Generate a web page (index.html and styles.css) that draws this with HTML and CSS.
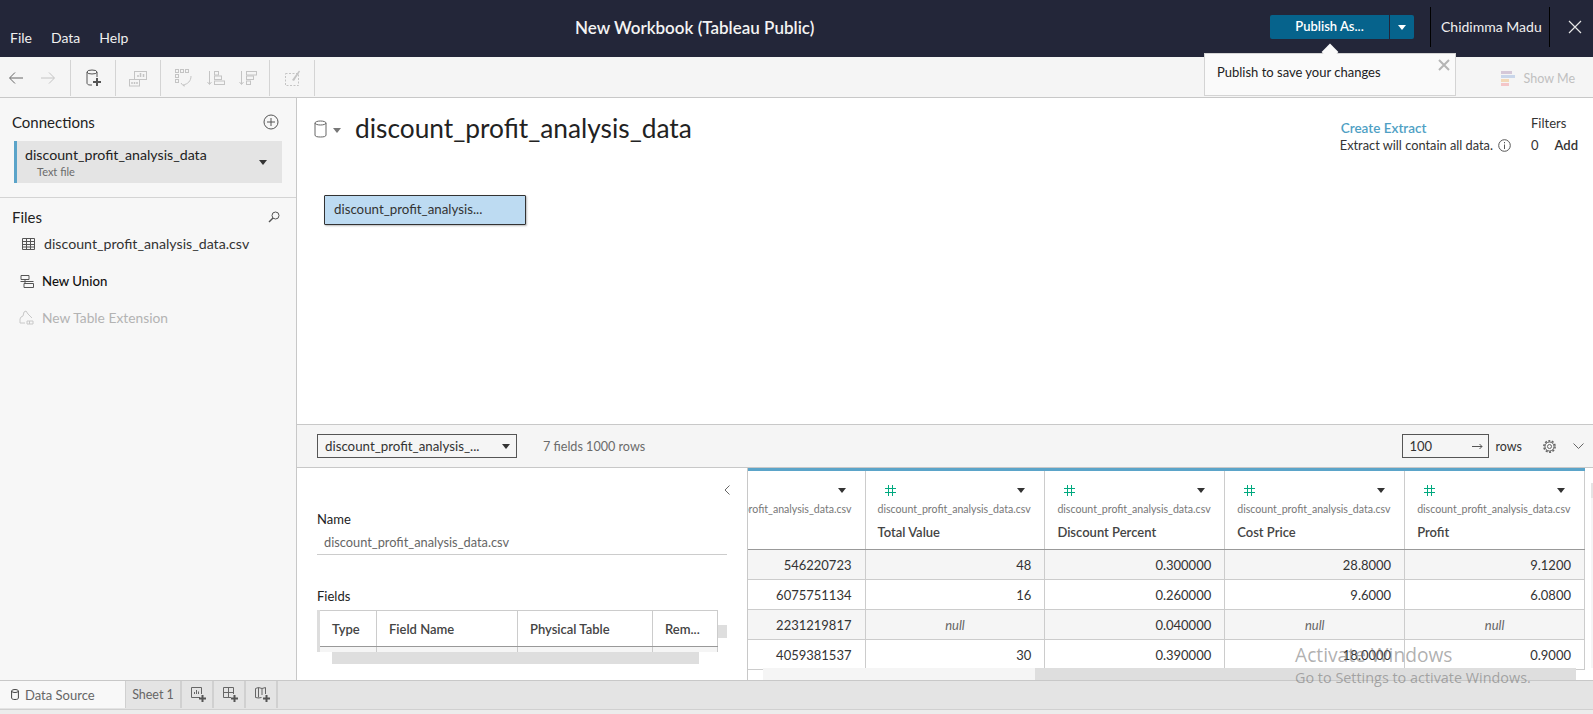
FILE: index.html
```html
<!DOCTYPE html>
<html>
  <head>
    <meta charset="UTF-8" />
    <title>New Workbook (Tableau Public)</title>
    <link rel="stylesheet" href="styles.css">
  </head>
  <body>
    <div class="app">
      <!-- Top bar -->
      <header class="topbar">
        <nav class="menu">
          <span>File</span>
          <span>Data</span>
          <span>Help</span>
        </nav>
        <div class="title">New Workbook (Tableau Public)</div>
        <div class="topbar-right">
          <div class="publish">
            <span class="publish-label">Publish As...</span>
            <span class="publish-arrow"><i class="caret caret-white"></i></span>
          </div>
          <div class="user">Chidimma Madu</div>
          <svg class="close-app" width="14" height="14" viewBox="0 0 14 14"><path d="M1 1l12 12M13 1L1 13" stroke="#e6e6e6" stroke-width="1.2" fill="none"/></svg>
        </div>
      </header>

      <!-- Toolbar -->
      <div class="toolbar">
        <div class="tool-group tg-nav">
          <svg width="16" height="14" viewBox="0 0 16 14"><path d="M15 7H2M7 1.500L1.500 7 7 12.500" stroke="#666" fill="none"/></svg>
          <svg width="16" height="14" viewBox="0 0 16 14"><path d="M1 7h13M9 1.500L14.500 7 9 12.500" stroke="#c4c4c4" fill="none"/></svg>
        </div>
        <div class="tool-group tg-data">
          <svg width="16" height="19" viewBox="0 0 16 19"><ellipse cx="6" cy="3" rx="5" ry="2" stroke="#555" fill="none"/><path d="M1 3v11c0 1 1 2 3 2h2M11 3v5" stroke="#555" fill="none"/><path d="M11 9v8M7 13h8" stroke="#555" stroke-width="2" fill="none"/></svg>
        </div>
        <div class="tool-group tg-chart">
          <svg width="18" height="17" viewBox="0 0 18 17"><g stroke="#c4c4c4" fill="none"><rect x="5.500" y="1.500" width="12" height="8"/><rect x="0.500" y="9.500" width="10" height="6.500"/></g><path d="M9 7V5M11.500 7V3M14.500 7V4M3 14v-2M5.500 14v-2M8 14v-2" stroke="#c4c4c4" stroke-width="1.500"/></svg>
        </div>
        <div class="tool-group tg-sort">
          <svg width="18" height="18" viewBox="0 0 18 18"><g stroke="#c4c4c4" fill="none"><rect x="0.500" y="0.500" width="3" height="3"/><rect x="5.500" y="0.500" width="3" height="3"/><rect x="10.500" y="0.500" width="3" height="3"/><rect x="0.500" y="5.500" width="3" height="3"/><rect x="0.500" y="10.500" width="3" height="3"/><path d="M16 7c0 5-3 8-8 9M6 14l2 2.500L10 17"/></g></svg>
          <svg width="18" height="16" viewBox="0 0 18 16"><g stroke="#c4c4c4" fill="none"><path d="M2.500 1v13M0.500 12l2 2.500 2-2.500"/><rect x="7.500" y="1.500" width="4" height="3.500"/><rect x="7.500" y="6" width="7" height="3.500"/><rect x="7.500" y="11" width="10" height="3.500"/></g></svg>
          <svg width="18" height="16" viewBox="0 0 18 16"><g stroke="#c4c4c4" fill="none"><path d="M2.500 1v13M0.500 12l2 2.500 2-2.500"/><rect x="7.500" y="1.500" width="10" height="3.500"/><rect x="7.500" y="6" width="7" height="3.500"/><rect x="7.500" y="11" width="4" height="3.500"/></g></svg>
        </div>
        <div class="tool-group tg-clear">
          <svg width="16" height="16" viewBox="0 0 16 16"><rect x="0.500" y="3.500" width="13" height="12" stroke="#c4c4c4" stroke-dasharray="2 1.500" fill="none"/><path d="M7 10l7-9.500 1 1L9 11z" fill="#c4c4c4"/></svg>
        </div>
        <div class="show-me">
          <svg width="15" height="16" viewBox="0 0 15 16"><rect y="1" width="11" height="3" fill="#d5c8d8"/><rect y="5" width="14" height="3" fill="#c9d6ea"/><rect y="9" width="8" height="3" fill="#f3d9b8"/><rect y="13" width="8" height="3" fill="#f4c6c8"/></svg>
          <span>Show Me</span>
        </div>
      </div>

      <!-- Publish tip -->
      <div class="tip">
        <span>Publish to save your changes</span>
        <svg class="tip-close" width="12" height="12" viewBox="0 0 12 12"><path d="M1 1l10 10M11 1L1 11" stroke="#b5b5b5" stroke-width="2" fill="none"/></svg>
      </div>

      <div class="main">
        <!-- Left sidebar -->
        <aside class="sidebar">
          <div class="side-top">
            <div class="side-head conn-head">
              <h2>Connections</h2>
              <svg width="16" height="16" viewBox="0 0 16 16"><circle cx="8" cy="8" r="7" stroke="#555" fill="none"/><path d="M8 4v8M4 8h8" stroke="#555" fill="none"/></svg>
            </div>
            <div class="conn">
              <div>
                <div class="conn-name">discount_profit_analysis_data</div>
                <div class="conn-type">Text file</div>
              </div>
              <i class="caret caret-dark"></i>
            </div>
          </div>
          <div class="side-files">
            <div class="side-head files-head">
              <h2>Files</h2>
              <svg width="12" height="12" viewBox="0 0 12 12"><circle cx="7.500" cy="4.500" r="3.500" stroke="#555" fill="none"/><path d="M5 7l-4 4" stroke="#555" stroke-width="1.500"/></svg>
            </div>
            <div class="file-row">
              <svg width="13" height="12" viewBox="0 0 13 12"><path d="M.5.500h12v11H.5zM.5 3.500h12M.5 6.500h12M.5 9h12M4.500 .5v11M8.500 .5v11" stroke="#555" fill="none"/></svg>
              <span>discount_profit_analysis_data.csv</span>
            </div>
            <div class="file-row union-row">
              <svg width="14" height="13" viewBox="0 0 14 13"><path d="M1 .5h8v4H1zM4 8.500h9.500v4H4zM.5 6.500h13M5 4.500v4" stroke="#555" fill="none"/></svg>
              <span>New Union</span>
            </div>
            <div class="file-row ext-row">
              <svg width="15" height="15" viewBox="0 0 15 15"><path d="M1 9l1-2 2-1 1-4 2-1 2 3 2 2 2 2M1 9v4h5M8 11h6v3H8zM10.500 11v3" stroke="#c8c8c8" fill="none"/></svg>
              <span>New Table Extension</span>
            </div>
          </div>
        </aside>

        <div class="content">
          <!-- Join canvas -->
          <section class="canvas">
            <div class="canvas-head">
              <svg width="13" height="18" viewBox="0 0 13 18"><ellipse cx="6.500" cy="3" rx="5.500" ry="2" stroke="#666" fill="none"/><path d="M1 3v12c0 1.500 2 2 5.500 2s5.500-.5 5.500-2V3" stroke="#666" fill="none"/></svg>
              <i class="caret caret-grey"></i>
              <h1>discount_profit_analysis_data</h1>
              <div class="extract">
                <div class="extract-link">Create Extract</div>
                <div class="extract-note">
                  Extract will contain all data.
                  <svg width="13" height="13" viewBox="0 0 13 13"><circle cx="6.500" cy="6.500" r="5.800" stroke="#555" fill="none"/><path d="M6.500 5.500v4.500M6.500 3v1.300" stroke="#555" fill="none"/></svg>
                </div>
              </div>
              <div class="filters">
                <div>Filters</div>
                <div class="filters-row"><span>0</span><b>Add</b></div>
              </div>
            </div>
            <div class="table-box">discount_profit_analysis...</div>
          </section>

          <!-- Data bar -->
          <div class="databar">
            <div class="select">
              <span>discount_profit_analysis_...</span>
              <i class="caret caret-dark"></i>
            </div>
            <span class="count">7 fields 1000 rows</span>
            <div class="rows-input">
              <span>100</span>
              <svg width="11" height="7" viewBox="0 0 11 7"><path d="M0 3.500h10M7.500 1l2.500 2.500L7.500 6" stroke="#555" fill="none"/></svg>
            </div>
            <span class="rows-label">rows</span>
            <svg class="gear" width="13" height="13" viewBox="0 0 13 13"><circle cx="6.500" cy="6.500" r="2" stroke="#666" fill="none"/><circle cx="6.500" cy="6.500" r="4.500" stroke="#666" stroke-width="1" fill="none"/><circle cx="6.500" cy="6.500" r="5.600" stroke="#666" stroke-width="1.600" stroke-dasharray="2 1.500" fill="none"/></svg>
            <svg class="chev" width="11" height="6" viewBox="0 0 11 6"><path d="M.5.500l5 5 5-5" stroke="#666" fill="none"/></svg>
          </div>

          <div class="panes">
            <!-- Metadata pane -->
            <div class="meta">
              <svg class="meta-back" width="6" height="10" viewBox="0 0 6 10"><path d="M5.500.500L1 5l4.500 4.500" stroke="#666" fill="none"/></svg>
              <div class="meta-label">Name</div>
              <div class="meta-name">discount_profit_analysis_data.csv</div>
              <div class="meta-label fields-label">Fields</div>
              <div class="fields-wrap">
                <table class="fields">
                  <tr>
                    <th class="f-type">Type</th>
                    <th class="f-name">Field Name</th>
                    <th class="f-table">Physical Table</th>
                    <th class="f-rem">Rem...</th>
                  </tr>
                  <tr class="fields-row">
                    <td></td>
                    <td></td>
                    <td></td>
                    <td></td>
                  </tr>
                </table>
                <div class="fields-vbar"></div>
              </div>
              <div class="fields-hbar"></div>
            </div>

            <!-- Data grid -->
            <div class="grid-wrap">
              <table class="grid">
                <tr class="grid-head">
                  <th class="col-cut">
                    <div class="head-top"><i class="caret caret-dark"></i></div>
                    <div class="head-src src-cut"><span>discount_profit_analysis_data.csv</span></div>
                    <div class="head-name">&nbsp;</div>
                  </th>
                  <th>
                    <div class="head-top"><svg class="hash" width="11" height="11" viewBox="0 0 11 11"><path d="M3.500 0v11M7.500 0v11M0 3.500h11M0 7.500h11"/></svg><i class="caret caret-dark"></i></div>
                    <div class="head-src">discount_profit_analysis_data.csv</div>
                    <div class="head-name">Total Value</div>
                  </th>
                  <th>
                    <div class="head-top"><svg class="hash" width="11" height="11" viewBox="0 0 11 11"><path d="M3.500 0v11M7.500 0v11M0 3.500h11M0 7.500h11"/></svg><i class="caret caret-dark"></i></div>
                    <div class="head-src">discount_profit_analysis_data.csv</div>
                    <div class="head-name">Discount Percent</div>
                  </th>
                  <th>
                    <div class="head-top"><svg class="hash" width="11" height="11" viewBox="0 0 11 11"><path d="M3.500 0v11M7.500 0v11M0 3.500h11M0 7.500h11"/></svg><i class="caret caret-dark"></i></div>
                    <div class="head-src">discount_profit_analysis_data.csv</div>
                    <div class="head-name">Cost Price</div>
                  </th>
                  <th>
                    <div class="head-top"><svg class="hash" width="11" height="11" viewBox="0 0 11 11"><path d="M3.500 0v11M7.500 0v11M0 3.500h11M0 7.500h11"/></svg><i class="caret caret-dark"></i></div>
                    <div class="head-src">discount_profit_analysis_data.csv</div>
                    <div class="head-name">Profit</div>
                  </th>
                </tr>
                <tr class="odd">
                  <td>546220723</td><td>48</td><td>0.300000</td><td>28.8000</td><td>9.1200</td>
                </tr>
                <tr>
                  <td>6075751134</td><td>16</td><td>0.260000</td><td>9.6000</td><td>6.0800</td>
                </tr>
                <tr class="odd">
                  <td>2231219817</td><td class="null">null</td><td>0.040000</td><td class="null">null</td><td class="null">null</td>
                </tr>
                <tr>
                  <td>4059381537</td><td>30</td><td>0.390000</td><td>18.0000</td><td>0.9000</td>
                </tr>
              </table>
              <div class="grid-hbar"><div class="grid-thumb"></div></div>
              <div class="grid-vbar"><div class="grid-vthumb"></div></div>
            </div>
          </div>
        </div>
      </div>

      <!-- Sheet tabs -->
      <footer class="tabs">
        <div class="tab tab-source">
          <svg width="8" height="11" viewBox="0 0 8 11"><ellipse cx="4" cy="2" rx="3.400" ry="1.500" stroke="#444" fill="none"/><path d="M.6 2v7c0 1 1.500 1.500 3.400 1.500S7.400 10 7.400 9V2" stroke="#444" fill="none"/></svg>
          <span>Data Source</span>
        </div>
        <div class="tab tab-sheet">Sheet 1</div>
        <div class="tab tab-new">
          <svg width="16" height="16" viewBox="0 0 16 16"><path d="M9 10.500H.5V.5h10V7" stroke="#666" fill="none"/><path d="M3.500 7V5M5.500 7V3M7.500 7V4.500" stroke="#666" fill="none"/><path d="M11.500 8v7M8 11.500h7" stroke="#555" stroke-width="2" fill="none"/></svg>
        </div>
        <div class="tab tab-new">
          <svg width="16" height="16" viewBox="0 0 16 16"><path d="M8 10.500H.5V.5h10V7M.5 5.500h10M5.500.5v10" stroke="#666" fill="none"/><path d="M11.500 8v7M8 11.500h7" stroke="#555" stroke-width="2" fill="none"/></svg>
        </div>
        <div class="tab tab-new">
          <svg width="16" height="16" viewBox="0 0 16 16"><path d="M.5 1.500l3 -1 3.500 1 3.500-1V7M.5 1.500v9l3 .5 3-.5M7 1.500V8M3.500.5v10" stroke="#666" fill="none"/><path d="M11.500 8v7M8 11.500h7" stroke="#555" stroke-width="2" fill="none"/></svg>
        </div>
      </footer>

      <!-- OS watermark -->
      <div class="watermark">
        <div class="wm-big">Activate Windows</div>
        <div class="wm-small">Go to Settings to activate Windows.</div>
      </div>
    </div>
  </body>
</html>
```

FILE: styles.css
```css
* {
  box-sizing: border-box;
}

body {
  margin: 0;
  font-family: Lato, "Open Sans", sans-serif;
  color: #333;
  background-color: #fff;
  overflow: hidden;
}

.app {
  position: relative;
  display: flex;
  flex-direction: column;
  width: 1593px;
  height: 714px;
  overflow: hidden;
}

h1, h2 {
  margin: 0;
  font-weight: normal;
}

svg {
  display: block;
  flex: none;
}

.caret {
  display: block;
  flex: none;
  width: 0;
  height: 0;
  border-left: 4px solid transparent;
  border-right: 4px solid transparent;
  border-top: 5px solid #333;
}

.caret-white {
  border-top-color: #fff;
}

.caret-grey {
  border-top-color: #777;
}

/* Top bar */
.topbar {
  display: flex;
  flex: none;
  height: 57px;
  background-color: #232639;
  color: #f0f0f0;
}

.menu {
  display: flex;
  gap: 19px;
  width: 575px;
  padding: 29px 0 0 10px;
  font-size: 14px;
}

.title {
  padding-top: 17px;
  font-size: 17px;
  font-weight: 600;
  color: #f3f3f3;
}

.topbar-right {
  display: flex;
  margin-left: auto;
  padding: 15px 11px 0 0;
}

.publish {
  display: flex;
  height: 24px;
  width: 144px;
  background-color: #06638c;
  border-radius: 2px;
  color: #fff;
  font-size: 13px;
  font-weight: 600;
}

.publish-label {
  flex: 1;
  text-align: center;
  line-height: 23px;
}

.publish-arrow {
  display: flex;
  align-items: center;
  justify-content: center;
  width: 25px;
  border-left: 1px solid #232639;
}

.user {
  width: 120px;
  height: 40px;
  margin: -8px 0 0 16px;
  padding-left: 10px;
  border-left: 1px solid #000;
  border-right: 1px solid #000;
  font-size: 14px;
  line-height: 40px;
}

.close-app {
  margin: 5px 0 0 18px;
}

/* Toolbar */
.toolbar {
  display: flex;
  flex: none;
  align-items: center;
  height: 41px;
  padding-top: 3px;
  padding-bottom: 1px;
  background-color: #f5f5f5;
  border-bottom: 1px solid #c8c8c8;
}

.tool-group {
  display: flex;
  align-items: center;
  height: 36px;
  border-right: 1px solid #d4d4d4;
}

.tg-nav {
  width: 71px;
  padding-left: 8px;
  gap: 16px;
}

.tg-data {
  width: 45px;
  padding-left: 15px;
}

.tg-chart {
  width: 45px;
  padding-left: 13px;
}

.tg-sort {
  width: 109px;
  padding-left: 14px;
  gap: 14px;
}

.tg-clear {
  width: 45px;
  padding-left: 15px;
}

.show-me {
  display: flex;
  align-items: center;
  gap: 8px;
  margin-left: auto;
  padding-right: 18px;
  color: #c0c0c0;
  font-size: 12.500px;
}

/* Publish tip */
.tip {
  position: absolute;
  left: 1204px;
  top: 53px;
  width: 252px;
  height: 43px;
  padding: 10px 0 0 12px;
  background-color: #fafafa;
  border: 1px solid #d4d4d4;
  font-size: 13px;
  color: #222;
}

.tip::before {
  content: "";
  position: absolute;
  left: 118px;
  top: -9px;
  width: 14px;
  height: 14px;
  background-color: #fafafa;
  transform: rotate(45deg) scale(0.85);
}

.tip-close {
  position: absolute;
  right: 5px;
  top: 5px;
}

/* Main area */
.main {
  display: flex;
  flex: 1;
  min-height: 0;
}

.sidebar {
  flex: none;
  width: 297px;
  background-color: #f7f7f7;
  border-right: 1px solid #c8c8c8;
}

.side-top {
  height: 100px;
  padding: 14px 14px 0 12px;
  border-bottom: 1px solid #d4d4d4;
}

.side-head {
  display: flex;
  align-items: center;
  justify-content: space-between;
  height: 20px;
}

.side-head h2 {
  font-size: 15px;
  color: #222;
}

.conn-head {
  padding-right: 3px;
}

.conn {
  display: flex;
  align-items: center;
  justify-content: space-between;
  height: 42px;
  margin: 9px 0 0 2px;
  padding: 0 15px 0 8px;
  background-color: #e4e4e4;
  border-left: 3px solid #5ba4c9;
}

.conn-name {
  font-size: 14.200px;
  color: #222;
}

.conn-type {
  margin: 2px 0 0 12px;
  font-size: 11px;
  color: #6b6b6b;
}

.side-files {
  padding: 9px 15px 0 12px;
}

.files-head {
  padding-right: 1px;
}

.file-row {
  display: flex;
  align-items: center;
  font-size: 14.200px;
  color: #333;
}

.file-row:nth-child(2) {
  gap: 9px;
  margin: 8px 0 0 10px;
}

.union-row {
  gap: 8px;
  margin: 21px 0 0 8px;
  color: #111;
  font-size: 13.200px;
  font-weight: 500;
}

.ext-row {
  gap: 8px;
  margin: 20px 0 0 7px;
  color: #b3b3b3;
  font-size: 13.800px;
}

/* Canvas */
.content {
  display: flex;
  flex: 1;
  flex-direction: column;
  min-width: 0;
}

.canvas {
  flex: none;
  height: 326px;
  padding: 22px 0 0 17px;
}

.canvas-head {
  display: flex;
  height: 75px;
}

.canvas-head .caret-grey {
  margin: 8px 0 0 6px;
}

.canvas-head h1 {
  margin: -8px 0 0 14px;
  font-size: 26.300px;
  color: #222;
}

.extract {
  margin: 0 0 0 auto;
  font-size: 12.800px;
}

.extract-link {
  padding-left: 1px;
  color: #4f9fc4;
  font-size: 13.500px;
  font-weight: 600;
}

.extract-note {
  display: flex;
  align-items: center;
  gap: 5px;
  margin-top: 1px;
  color: #333;
}

.filters {
  width: 62px;
  margin: -5px 0 0 20px;
  font-size: 13px;
}

.filters-row {
  display: flex;
  gap: 16px;
  margin-top: 6px;
}

.filters-row b {
  font-weight: 600;
}

.table-box {
  width: 202px;
  height: 30px;
  margin: 0 0 0 10px;
  padding-left: 9px;
  background-color: #bddbf2;
  border: 1px solid #333;
  border-radius: 1px;
  box-shadow: 1px 1px 2px #bbb;
  font-size: 13.300px;
  line-height: 27px;
}

/* Data bar */
.databar {
  display: flex;
  flex: none;
  align-items: center;
  height: 44px;
  padding: 0 9px 0 20px;
  background-color: #f5f5f5;
  border-top: 1px solid #c8c8c8;
  border-bottom: 1px solid #c8c8c8;
}

.select {
  display: flex;
  align-items: center;
  justify-content: space-between;
  width: 200px;
  height: 24px;
  padding: 0 6px 0 7px;
  border: 1px solid #555;
  font-size: 13.300px;
}

.count {
  margin-left: 26px;
  font-size: 12.600px;
  color: #6b6b6b;
}

.rows-input {
  display: flex;
  align-items: center;
  justify-content: space-between;
  width: 87px;
  height: 24px;
  margin-left: auto;
  padding: 0 5px 0 7px;
  border: 1px solid #555;
  font-size: 13px;
}

.rows-label {
  margin-left: 7px;
  font-size: 12.500px;
}

.gear {
  margin-left: 21px;
}

.chev {
  margin-left: 17px;
}

/* Lower panes */
.panes {
  display: flex;
  flex: 1;
  min-height: 0;
}

.meta {
  position: relative;
  flex: none;
  width: 451px;
  padding: 43px 0 0 20px;
  border-right: 1px solid #c8c8c8;
}

.meta-back {
  position: absolute;
  left: 427px;
  top: 17px;
}

.meta-label {
  font-size: 13px;
  color: #222;
}

.meta-name {
  width: 410px;
  height: 28px;
  padding: 7px 0 0 7px;
  border-bottom: 1px solid #ccc;
  font-size: 12.800px;
  color: #666;
}

.fields-label {
  margin-top: 33px;
}

.fields-wrap {
  display: flex;
  height: 42px;
  margin-top: 6px;
  overflow: hidden;
}

.fields {
  width: 401px;
  height: 42px;
  border-collapse: collapse;
  table-layout: fixed;
  border-left: 3px solid #ddd;
}

.fields th {
  height: 36px;
  padding: 0 0 0 12px;
  border-top: 1px solid #ccc;
  border-right: 1px solid #ccc;
  border-bottom: 1px solid #999;
  font-size: 13px;
  font-weight: 600;
  text-align: left;
  color: #444;
}

.f-type {
  width: 58px;
}

.f-name {
  width: 141px;
}

.f-table {
  width: 135px;
}

.fields-row td {
  height: 6px;
  padding: 0;
  background-color: #f5f5f5;
  border-right: 1px solid #ccc;
}

.fields-vbar {
  width: 9px;
  height: 13px;
  margin-top: 15px;
  background-color: #dedede;
}

.fields-hbar {
  width: 367px;
  height: 12px;
  margin-left: 15px;
  background-color: #dedede;
}

/* Data grid */
.grid-wrap {
  position: relative;
  flex: 1;
  min-width: 0;
  overflow: hidden;
}

.grid {
  width: 837px;
  border-collapse: collapse;
  table-layout: fixed;
  font-size: 13px;
}

.col-cut {
  width: 117px;
}

.grid th {
  height: 80px;
  padding: 0;
  border-top: 3px solid #5ba4c9;
  border-right: 1px solid #ccc;
  border-bottom: 1px solid #999;
  font-weight: normal;
  text-align: left;
  vertical-align: top;
  overflow: hidden;
}

.head-top {
  display: flex;
  align-items: center;
  justify-content: space-between;
  height: 12px;
  margin-top: 13px;
  padding: 0 19px 0 19px;
}

.col-cut .head-top {
  justify-content: flex-end;
}

.hash {
  stroke: #00a97f;
  fill: none;
}

.head-src {
  margin-top: 7px;
  padding-left: 12px;
  font-size: 10.600px;
  color: #777;
  white-space: nowrap;
}

.src-cut {
  display: flex;
  justify-content: flex-end;
  padding: 0 13px 0 0;
}

.src-cut span {
  flex: none;
}

.head-name {
  margin-top: 9px;
  padding-left: 12px;
  font-size: 13px;
  font-weight: 600;
  color: #444;
}

.grid td {
  height: 30px;
  padding: 0 13px 0 0;
  border-right: 1px solid #ccc;
  border-bottom: 1px solid #ccc;
  text-align: right;
  color: #333;
}

.grid .odd td {
  background-color: #f5f5f5;
}

.grid td.null {
  padding: 0;
  text-align: center;
  font-style: italic;
  color: #666;
}

.grid-hbar {
  position: absolute;
  left: 15px;
  right: 17px;
  bottom: 0;
  height: 12px;
  background-color: #f5f5f5;
}

.grid-thumb {
  height: 12px;
  margin-left: 272px;
  background-color: #dedede;
}

.grid-vbar {
  position: absolute;
  right: 0;
  top: 15px;
  width: 2px;
  height: 185px;
  background-color: #f5f5f5;
}

.grid-vthumb {
  width: 2px;
  height: 15px;
  background-color: #e4e4e4;
}

/* Sheet tabs */
.tabs {
  display: flex;
  flex: none;
  height: 34px;
  background-color: #e4e4e4;
  border-top: 1px solid #c8c8c8;
  border-bottom: 4px solid #ececec;
  box-shadow: inset 0 -1px 0 #d0d0d0;
  font-size: 13px;
  color: #666;
}

.tab {
  display: flex;
  align-items: center;
  height: 27px;
  border-right: 2px solid #d0d0d0;
}

.tab-source {
  gap: 6px;
  width: 126px;
  padding-left: 11px;
  background-color: #f8f8f8;
  border-right: 1px solid #d0d0d0;
}

.tab-sheet {
  justify-content: center;
  width: 56px;
  font-size: 12.500px;
}

.tab-new {
  justify-content: center;
  width: 32px;
  padding-left: 3px;
}

/* Watermark */
.watermark {
  position: absolute;
  left: 1295px;
  top: 641px;
  font-family: "Open Sans", sans-serif;
  color: rgba(110, 110, 110, 0.55);
  white-space: nowrap;
}

.wm-big {
  font-size: 19.200px;
}

.wm-small {
  font-size: 14.400px;
}
```
